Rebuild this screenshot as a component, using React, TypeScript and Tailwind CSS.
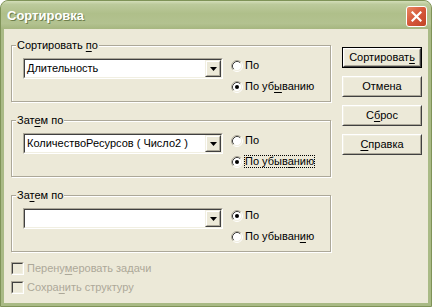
import React from "react";

function U({ text, i }: { text: string; i: number }) {
  if (i < 0) return <>{text}</>;
  return (
    <>
      {text.slice(0, i)}
      <span className="underline underline-offset-[2px] decoration-1">{text[i]}</span>
      {text.slice(i + 1)}
    </>
  );
}

function RadioIcon({ checked }: { checked: boolean }) {
  return (
    <svg width="12" height="12" viewBox="0 0 12 12" className="shrink-0">
      <circle cx="6" cy="6" r="4.5" fill="#ffffff" />
      <path d="M2.11 9.89 A5.5 5.5 0 0 1 9.89 2.11" fill="none" stroke="#ACA899" strokeWidth="1" />
      <path d="M2.82 9.18 A4.5 4.5 0 0 1 9.18 2.82" fill="none" stroke="#404040" strokeWidth="1" />
      <path d="M9.89 2.11 A5.5 5.5 0 0 1 2.11 9.89" fill="none" stroke="#ffffff" strokeWidth="1" />
      <path d="M9.18 2.82 A4.5 4.5 0 0 1 2.82 9.18" fill="none" stroke="#F1EFE2" strokeWidth="1" />
      {checked && <circle cx="6" cy="6" r="2" fill="#000000" />}
    </svg>
  );
}

function Radio({
  checked,
  text,
  u,
  focus,
}: {
  checked: boolean;
  text: string;
  u: number;
  focus?: boolean;
}) {
  return (
    <div className="flex items-center h-[21px]">
      <RadioIcon checked={checked} />
      {focus ? (
        <span className="ml-[1px] border border-dotted border-black leading-[11px]">
          <U text={text} i={u} />
        </span>
      ) : (
        <span className="ml-[2px] leading-[13px]">
          <U text={text} i={u} />
        </span>
      )}
    </div>
  );
}

function DropBtn() {
  return (
    <div className="w-[16px] h-full border border-t-[#F1EFE2] border-l-[#F1EFE2] border-b-[#404040] border-r-[#404040]">
      <div className="w-full h-full border border-t-white border-l-white border-b-[#ACA899] border-r-[#ACA899] bg-[#ECE9D8] flex items-center justify-center">
        <svg width="7" height="4" viewBox="0 0 7 4">
          <path d="M0 0 H7 L3.5 4 Z" fill="#000" />
        </svg>
      </div>
    </div>
  );
}

function Combo({ value }: { value: string }) {
  return (
    <div className="mt-[3px] w-[200px] h-[21px] border border-t-[#ACA899] border-l-[#ACA899] border-b-white border-r-white shrink-0">
      <div className="h-full border border-t-[#404040] border-l-[#404040] border-b-[#F1EFE2] border-r-[#F1EFE2] bg-white flex">
        <span className="flex-1 pl-[2px] flex items-center whitespace-nowrap overflow-hidden leading-[13px]">{value}</span>
        <DropBtn />
      </div>
    </div>
  );
}

function Group({
  label,
  lu,
  value,
  desc,
  descU,
  focus,
  className,
}: {
  label: string;
  lu: number;
  value: string;
  desc: boolean;
  descU: number;
  focus?: boolean;
  className?: string;
}) {
  return (
    <div
      className={
        "w-[320px] h-[57px] border border-[#ACA899] shadow-[inset_1px_1px_0_#ffffff,1px_1px_0_#ffffff] " +
        (className ?? "")
      }
    >
      <div className="-mt-[7px] ml-[4px] px-[1px] w-fit h-[13px] bg-[#ECE9D8] leading-[13px]">
        <U text={label} i={lu} />
      </div>
      <div className="flex items-start mt-[3px] pl-[11px]">
        <Combo value={value} />
        <div className="ml-[8px] flex flex-col">
          <Radio checked={!desc} text="По" u={-1} />
          <Radio checked={desc} text="По убыванию" u={descU} focus={focus} />
        </div>
      </div>
    </div>
  );
}

function Btn({ text, u, def }: { text: string; u: number; def?: boolean }) {
  const inner = (
    <div className="h-full border border-t-white border-l-white border-b-[#404040] border-r-[#404040]">
      <div className="h-full border border-t-[#F1EFE2] border-l-[#F1EFE2] border-b-[#ACA899] border-r-[#ACA899] flex items-center justify-center leading-[13px]">
        <U text={text} i={u} />
      </div>
    </div>
  );
  return def ? (
    <div className="w-[80px] h-[21px] border border-black">{inner}</div>
  ) : (
    <div className="w-[80px] h-[21px]">{inner}</div>
  );
}

function Check({ text, u }: { text: string; u: number }) {
  return (
    <div className="flex items-center h-[19px] pl-[7px]">
      <div className="w-[13px] h-[13px] border border-t-[#ACA899] border-l-[#ACA899] border-b-white border-r-white">
        <div className="w-full h-full border border-t-[#404040] border-l-[#404040] border-b-[#F1EFE2] border-r-[#F1EFE2] bg-[#ECE9D8]" />
      </div>
      <span className="ml-[3px] text-[#ACA899] leading-[13px]">
        <U text={text} i={u} />
      </span>
    </div>
  );
}

export default function App() {
  return (
    <div className="w-[432px] h-[307px] bg-white font-['Tahoma','Liberation_Sans',sans-serif] text-[11px] text-black">
      <div className="w-full h-full rounded-t-[8px] bg-[#A9BA85] border border-[#7F9358] flex flex-col overflow-hidden">
        <div className="h-[28px] shrink-0 flex items-center justify-between pl-[6px] pr-[4px] bg-[linear-gradient(to_bottom,#D3DEB9_0%,#BCCA9C_12%,#AFBF8A_45%,#B3C290_80%,#A6B680_100%)]">
          <span className="text-white font-bold text-[13px] font-['Liberation_Sans',sans-serif] [text-shadow:1px_1px_0_#6F7F4C] mt-[2px]">
            Сортировка
          </span>
          <div className="w-[21px] h-[21px] mt-[3px] rounded-[3px] border border-white bg-[linear-gradient(135deg,#E98862_0%,#D5573A_50%,#C14426_100%)] flex items-center justify-center">
            <svg width="11" height="11" viewBox="0 0 11 11">
              <path d="M1.5 1.5 L9.5 9.5 M9.5 1.5 L1.5 9.5" stroke="#ffffff" strokeWidth="2.2" strokeLinecap="square" />
            </svg>
          </div>
        </div>
        <div className="flex-1 mx-[3px] mb-[3px] bg-[#ECE9D8] flex">
          <div className="pl-[7px] pt-[16px] flex flex-col">
            <Group label="Сортировать по" lu={12} value="Длительность" desc descU={5} />
            <Group
              label="Затем по"
              lu={3}
              value="КоличествоРесурсов ( Число2 )"
              desc
              descU={7}
              focus
              className="mt-[18px]"
            />
            <Group label="Затем по" lu={2} value="" desc={false} descU={9} className="mt-[18px]" />
            <div className="mt-[7px] -ml-[7px]">
              <Check text="Перенумеровать задачи" u={6} />
              <Check text="Сохранить структуру" u={5} />
            </div>
          </div>
          <div className="ml-[11px] pt-[18px] flex flex-col gap-[8px]">
            <Btn text="Сортировать" u={10} def />
            <Btn text="Отмена" u={-1} />
            <Btn text="Сброс" u={1} />
            <Btn text="Справка" u={0} />
          </div>
        </div>
      </div>
    </div>
  );
}
